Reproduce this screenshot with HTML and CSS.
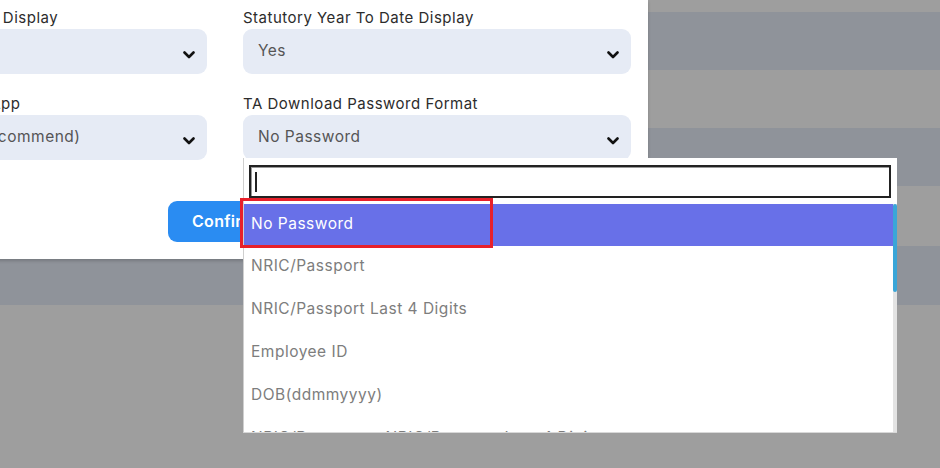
FILE: index.html
```html
<!DOCTYPE html>
<html>
<head>
<meta charset="utf-8">
<link rel="stylesheet" href="styles.css">
</head>
<body>
<div class="bg">
  <div class="stripe light s0"></div>
  <div class="stripe dark s1"></div>
  <div class="stripe light s1"></div>
  <div class="stripe dark s1"></div>
  <div class="stripe light s2"></div>
  <div class="stripe dark s3"></div>
  <div class="stripe light rest"></div>
</div>

<div class="modal">
  <div class="grid">
    <div class="field">
      <div class="label">Allowance Year To Date Display</div>
      <div class="select"><span class="value"></span><svg class="chev" viewBox="0 0 12 8"><path d="M1.5 1.5l4.5 4.5 4.5-4.5"/></svg></div>
    </div>
    <div class="field">
      <div class="label">Statutory Year To Date Display</div>
      <div class="select"><span class="value">Yes</span><svg class="chev" viewBox="0 0 12 8"><path d="M1.5 1.5l4.5 4.5 4.5-4.5"/></svg></div>
    </div>
    <div class="field">
      <div class="label">Passwords For Mobile App</div>
      <div class="select"><span class="value">Enable Password (Recommend)</span><svg class="chev" viewBox="0 0 12 8"><path d="M1.5 1.5l4.5 4.5 4.5-4.5"/></svg></div>
    </div>
    <div class="field">
      <div class="label">TA Download Password Format</div>
      <div class="select"><span class="value">No Password</span><svg class="chev" viewBox="0 0 12 8"><path d="M1.5 1.5l4.5 4.5 4.5-4.5"/></svg></div>
    </div>
  </div>
  <div class="footer">
    <button class="confirm">Confirm</button>
  </div>
</div>

<div class="dropdown">
  <div class="search"><span class="caret"></span></div>
  <div class="listwrap">
    <ul class="options">
      <li class="opt active">No Password</li>
      <li class="opt">NRIC/Passport</li>
      <li class="opt">NRIC/Passport Last 4 Digits</li>
      <li class="opt">Employee ID</li>
      <li class="opt">DOB(ddmmyyyy)</li>
      <li class="opt">NRIC/Passport + NRIC/Passport Last 4 Digits</li>
    </ul>
    <div class="track"><div class="thumb"></div></div>
  </div>
  <div class="highlight"></div>
</div>
</body>
</html>
```

FILE: styles.css
```css
* { box-sizing: border-box; }
html, body {
  margin: 0;
  padding: 0;
  width: 940px;
  height: 468px;
  overflow: hidden;
  font-family: "Inter", "Noto Sans", sans-serif;
}
.bg {
  display: flex;
  flex-direction: column;
  height: 468px;
}
.stripe.light { background: #9e9e9e; }
.stripe.dark { background: #8f939a; }
.s0 { height: 12px; }
.s1 { height: 58px; }
.s2 { height: 60px; }
.s3 { height: 59px; }
.rest { flex: 1; }

.modal {
  position: absolute;
  left: -198px;
  top: 0;
  width: 846px;
  background: #fff;
  padding: 7px 17px 17px;
  box-shadow: 0 2px 3px rgba(0,0,0,0.18);
}
.grid {
  display: grid;
  grid-template-columns: 388px 388px;
  column-gap: 36px;
  row-gap: 19px;
}
.label {
  font-size: 15px;
  letter-spacing: 0.5px;
  line-height: 21px;
  color: #2c2c2c;
  margin-bottom: 1px;
  white-space: nowrap;
}
.select {
  height: 45px;
  background: #e6ebf5;
  border-radius: 9px;
  display: flex;
  align-items: center;
  justify-content: space-between;
  padding: 0 12px 0 15px;
}
.value {
  font-size: 15.5px;
  letter-spacing: 0.5px;
  color: #555;
  margin-top: -3px;
  white-space: nowrap;
}
.chev {
  width: 12px;
  height: 8px;
  margin-top: 6px;
  fill: none;
  stroke: #111;
  stroke-width: 2.6;
  stroke-linecap: round;
  stroke-linejoin: round;
}
.footer {
  display: flex;
  justify-content: center;
  margin-top: 41px;
}
.confirm {
  width: 114px;
  height: 41px;
  border: none;
  border-radius: 9px;
  background: #2a8cf2;
  color: #fff;
  font-family: inherit;
  font-size: 16px;
  letter-spacing: 0.3px;
  font-weight: 600;
  text-align: left;
  padding: 0 0 1px 24px;
}

.dropdown {
  position: absolute;
  left: 243px;
  top: 158px;
  width: 654px;
  height: 275px;
  background: #fff;
  border-left: 1px solid #cfcfcf;
  border-bottom: 1px solid #d8d8d8;
  padding: 7px 5px 0 5px;
}
.search {
  height: 33px;
  border: 2px solid #222;
  box-shadow: inset 1px 1px 0 #999;
  display: flex;
  align-items: center;
  padding-left: 4px;
  margin-right: 1px;
}
.caret {
  width: 1.5px;
  height: 20px;
  background: #222;
}
.listwrap {
  display: flex;
  margin-top: 6px;
  margin-left: -5px;
  margin-right: -5px;
  height: 228px;
  overflow: hidden;
}
.options {
  list-style: none;
  margin: 0;
  padding: 0;
  flex: 1;
}
.opt {
  height: 43px;
  line-height: 40px;
  padding-left: 7px;
  font-size: 15.5px;
  letter-spacing: 0.5px;
  color: #7d7d7d;
  white-space: nowrap;
}
.opt.active {
  height: 42px;
  line-height: 40px;
  background: #6870e8;
  color: #fff;
}
.track {
  width: 4px;
  background: #e3e3e3;
}
.thumb {
  height: 88px;
  background: #3aa6d8;
  border-radius: 2px;
}
.highlight {
  position: absolute;
  left: -4px;
  top: 40px;
  width: 253px;
  height: 50px;
  border: 3px solid #e8202a;
}
```
